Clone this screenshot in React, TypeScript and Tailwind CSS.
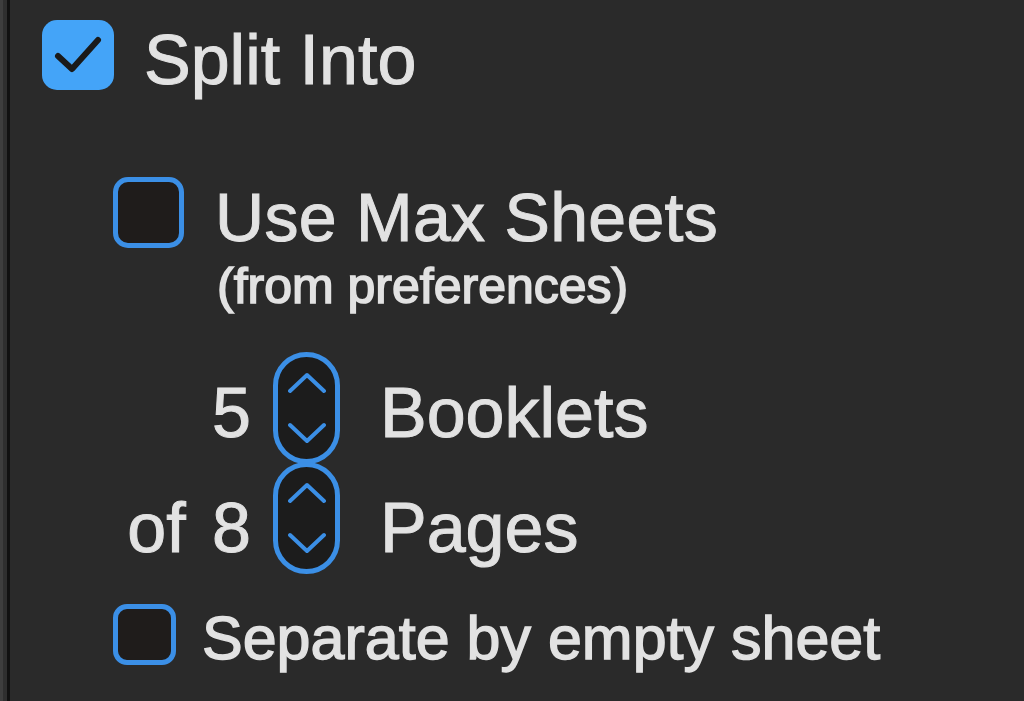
const Chevron = ({ up }: { up?: boolean }) => (
  <svg width="38" height="22" viewBox="0 0 38 22" fill="none">
    <path
      d={up ? "M2 19 L19 3 L36 19" : "M2 3 L19 19 L36 3"}
      stroke="#3b8fe6"
      strokeWidth="4"
      strokeLinecap="round"
      strokeLinejoin="round"
    />
  </svg>
);

const Stepper = ({ className = "" }: { className?: string }) => (
  <div
    className={`w-[67px] h-[112px] rounded-full border-[5px] border-[#3b8fe6] bg-[#1c1c1c] flex flex-col items-center justify-between py-[15px] ${className}`}
  >
    <Chevron up />
    <Chevron />
  </div>
);

export default function App() {
  return (
    <div
      className="flex h-[701px] w-full bg-[#2a2a2a] text-[#e2e2e2] overflow-hidden [-webkit-text-stroke:1px_#e2e2e2]"
      style={{ fontFamily: '"Liberation Sans", Arial, sans-serif' }}
    >
      {/* window edge */}
      <div className="w-[3px] bg-[#3e3e3e]" />
      <div className="w-[4px] bg-[#2f2f2f]" />
      <div className="w-[3px] bg-[#111111]" />

      <div className="flex flex-col flex-1">
        {/* Split Into */}
        <div className="flex items-start h-[70px] mt-[20px] ml-[32px]">
          <div className="w-[72px] h-[70px] rounded-[15px] bg-[#44a4f8] flex items-center justify-center">
            <svg width="50" height="40" viewBox="0 0 50 40" fill="none">
              <path
                d="M5 21 L19 34 L45 5"
                stroke="#1a1a1a"
                strokeWidth="6"
                strokeLinecap="round"
                strokeLinejoin="round"
              />
            </svg>
          </div>
          <span className="ml-[30px] mt-[5px] text-[70px] leading-none">Split Into</span>
        </div>

        {/* Use Max Sheets */}
        <div className="flex items-start mt-[87px] ml-[103px]">
          <div className="w-[71px] h-[71px] rounded-[15px] border-[5px] border-[#3b8fe6] bg-[#1f1c1b]" />
          <div className="ml-[31px] mt-[6px] flex flex-col">
            <span className="text-[68px] leading-none tracking-[0.3px]">Use Max Sheets</span>
            <span className="mt-[10px] ml-[2px] text-[50px] leading-none [-webkit-text-stroke:1.6px_#e2e2e2]">
              (from preferences)
            </span>
          </div>
        </div>

        {/* steppers */}
        <div className="flex flex-col mt-[41px]">
          <div className="flex items-start">
            <span className="w-[241px] text-right text-[70px] leading-none mt-[26px]">5</span>
            <Stepper className="ml-[22px]" />
            <span className="ml-[40px] mt-[26px] text-[70px] leading-none">Booklets</span>
          </div>
          <div className="flex items-start -mt-[2px]">
            <span className="w-[241px] text-right text-[70px] leading-none mt-[31px] [word-spacing:7px]">
              of 8
            </span>
            <Stepper className="ml-[22px]" />
            <span className="ml-[40px] mt-[31px] text-[70px] leading-none">Pages</span>
          </div>
        </div>

        {/* Separate */}
        <div className="flex items-start mt-[30px] ml-[103px]">
          <div className="w-[63px] h-[61px] rounded-[14px] border-[5px] border-[#3b8fe6] bg-[#1f1c1b]" />
          <span className="ml-[26px] mt-[4px] text-[61px] leading-none whitespace-nowrap [-webkit-text-stroke:1.4px_#e2e2e2]">
            Separate by empty sheet
          </span>
        </div>
      </div>
    </div>
  );
}
